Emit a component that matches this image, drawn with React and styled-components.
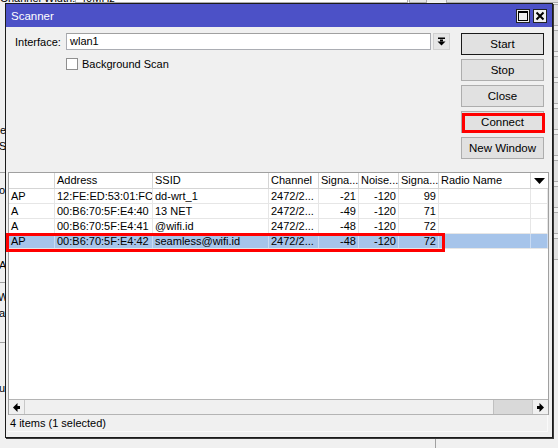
import React from 'react';
import styled, { createGlobalStyle } from 'styled-components';

const GlobalStyle = createGlobalStyle`
  html, body {
    margin: 0;
    padding: 0;
    background: #f0f0f0;
  }
  * { box-sizing: border-box; }
`;

const FONT = `"Liberation Sans", Arial, sans-serif`;

// column widths incl. right gridline: flags, address, ssid, channel, signal, noise, signal, radio name, rest
const COLS = '46px 98px 116px 50px 40px 40px 40px 92px 1fr';

const Desktop = styled.div`
  position: relative;
  width: 558px;
  height: 448px;
  overflow: hidden;
  background: #f0f0f0;
  font-family: ${FONT};
  font-size: 11px;
  color: #000;
`;

// bits of the window lying underneath the scanner
const BackText = styled.span`
  position: absolute;
  left: ${p => p.$x}px;
  top: ${p => p.$y}px;
  line-height: 13px;
  white-space: nowrap;
`;

const BackLine = styled.div`
  position: absolute;
  left: ${p => p.$x}px;
  top: ${p => p.$y}px;
  width: ${p => p.$w}px;
  height: ${p => p.$h}px;
  background: #a0a0a0;
`;

const BackBox = styled.div`
  position: absolute;
  left: ${p => p.$x}px;
  top: ${p => p.$y}px;
  width: ${p => p.$w}px;
  height: ${p => p.$h}px;
  border: 1px solid #adadad;
  background: ${p => p.$bg || '#e1e1e1'};
`;

const Window = styled.div`
  position: absolute;
  left: 5px;
  top: 3px;
  width: 548px;
  height: 435px;
  border: 1px solid #1b1b1b;
  box-shadow: 1px 1px 0 #3a3a3a;
  background: #f0f0f0;
  display: flex;
  flex-direction: column;
`;

const TitleBar = styled.div`
  height: 23px;
  flex: none;
  background: #4c51c7;
  display: flex;
  align-items: center;
  padding: 0 5px 0 5px;
`;

const TitleText = styled.div`
  flex: 1;
  color: #fff;
  font-size: 11.5px;
`;

const TitleButton = styled.div`
  width: 14px;
  height: 14px;
  margin-left: 3px;
  background: #f0f0f0;
  border: 1px solid #222;
  display: flex;
  align-items: center;
  justify-content: center;
`;

const Body = styled.div`
  flex: 1;
  display: flex;
  flex-direction: column;
  min-height: 0;
  padding-bottom: 5px;
`;

const TopArea = styled.div`
  height: 145px;
  flex: none;
  display: flex;
  padding: 6px 8px 0 9px;
`;

const Form = styled.div`
  flex: 1;
  display: flex;
  flex-direction: column;
  padding-right: 11px;
`;

const FieldRow = styled.div`
  display: flex;
  align-items: center;
  height: 17px;
`;

const Label = styled.div`
  width: 51px;
  flex: none;
`;

const TextInput = styled.div`
  flex: 1;
  height: 17px;
  background: #fff;
  border: 1px solid #abadb3;
  border-top-color: #a0a0a0;
  padding: 1px 3px;
  line-height: 13px;
`;

const DropButton = styled.div`
  width: 17px;
  height: 17px;
  margin-left: 2px;
  flex: none;
  background: #e6e6e6;
  border: 1px solid #d0d0d0;
  display: flex;
  align-items: center;
  justify-content: center;
`;

const CheckRow = styled.div`
  display: flex;
  align-items: center;
  margin-top: 8px;
  padding-left: 51px;
  height: 12px;
`;

const CheckBox = styled.div`
  width: 12px;
  height: 12px;
  background: #fff;
  border: 1px solid #8f8f8f;
  margin-right: 4px;
`;

const ButtonColumn = styled.div`
  width: 83px;
  flex: none;
  display: flex;
  flex-direction: column;
  gap: 4px;
`;

const Button = styled.div`
  position: relative;
  height: 22px;
  background: #e1e1e1;
  border: 1px solid ${p => p.$default ? '#1a1a1a' : '#adadad'};
  display: flex;
  align-items: center;
  justify-content: center;
  font-size: 11.5px;
`;

const ButtonMark = styled.div`
  position: absolute;
  left: 0;
  right: -2px;
  top: 1px;
  bottom: -1px;
  border: 3px solid #ff0000;
  pointer-events: none;
`;

const Table = styled.div`
  position: relative;
  flex: 1;
  min-height: 0;
  margin: 0 3px 0 2px;
  border: 1px solid #a0a0a0;
  border-bottom: none;
  background: #fff;
  display: flex;
  flex-direction: column;
`;

const HeaderRow = styled.div`
  display: grid;
  grid-template-columns: ${COLS};
  height: 16px;
  border-bottom: 1px solid #d5d5d5;
  flex: none;
`;

const HeaderCell = styled.div`
  border-right: ${p => p.$last ? 'none' : '1px solid #d5d5d5'};
  padding: 0 2px;
  line-height: 15px;
  white-space: nowrap;
  overflow: hidden;
  display: flex;
  align-items: center;
  justify-content: ${p => p.$center ? 'center' : 'flex-start'};
`;

const Rows = styled.div`
  flex: 1;
  min-height: 0;
`;

const Row = styled.div`
  display: grid;
  grid-template-columns: ${COLS};
  height: 15px;
  background: ${p => p.$selected ? '#a6c4ea' : '#fff'};
  border-bottom: 1px solid #e6e6e6;
`;

const Cell = styled.div`
  border-right: 1px solid ${p => p.$selected ? '#c9dbf3' : '#e6e6e6'};
  padding: 0 2px;
  line-height: 14px;
  white-space: nowrap;
  overflow: hidden;
  text-align: ${p => p.$num ? 'right' : 'left'};
`;

const RowMark = styled.div`
  position: absolute;
  left: -3px;
  top: 60px;
  width: 439px;
  height: 19px;
  border: 3px solid #ff0000;
  pointer-events: none;
`;

const ScrollBar = styled.div`
  height: 16px;
  flex: none;
  display: flex;
  border-top: 1px solid #b4b4b4;
  border-bottom: 1px solid #b4b4b4;
  background: #f0f0f0;
`;

const ScrollArrow = styled.div`
  width: 16px;
  flex: none;
  display: flex;
  align-items: center;
  justify-content: center;
  border-${p => p.$side}: 1px solid #c8c8c8;
`;

const ScrollThumb = styled.div`
  flex: 1;
  background: #f0f0f0;
`;

const ScrollTrack = styled.div`
  width: 39px;
  flex: none;
  background: #d9d9d9;
  border-left: 1px solid #c0c0c0;
`;

const StatusBar = styled.div`
  height: 17px;
  flex: none;
  margin: 0 4px 0 2px;
  padding-left: 2px;
  display: flex;
  align-items: center;
  border-bottom: 1px solid #fafafa;
  border-right: 1px solid #fafafa;
`;

const DropIcon = () => (
  <svg width="9" height="9" viewBox="0 0 9 9">
    <rect x="1" y="0.5" width="7" height="1.5" fill="#000" />
    <rect x="3" y="2.5" width="3" height="2" fill="#000" />
    <polygon points="0.5,4.5 8.5,4.5 4.5,8.5" fill="#000" />
  </svg>
);

const DownTriangle = () => (
  <svg width="11" height="6" viewBox="0 0 11 6">
    <polygon points="0,0 11,0 5.5,6" fill="#000" />
  </svg>
);

const SideArrow = ({ dir }) => (
  <svg width="7" height="9" viewBox="0 0 7 9" style={{ transform: dir === 'left' ? 'scaleX(-1)' : 'none' }}>
    <rect x="0" y="3" width="3" height="3" fill="#000" />
    <polygon points="2.5,0 7,4.5 2.5,9" fill="#000" />
  </svg>
);

const MaxIcon = () => (
  <svg width="10" height="10" viewBox="0 0 10 10">
    <rect x="0.5" y="0.5" width="9" height="9" fill="none" stroke="#000" strokeWidth="1" />
    <rect x="0.5" y="0.5" width="9" height="1.5" fill="#000" />
  </svg>
);

const CloseIcon = () => (
  <svg width="10" height="10" viewBox="0 0 10 10">
    <path d="M1.5 1.5 L8.5 8.5 M8.5 1.5 L1.5 8.5" stroke="#000" strokeWidth="2" />
  </svg>
);

const headers = ['', 'Address', 'SSID', 'Channel', 'Signa...', 'Noise...', 'Signa...', 'Radio Name'];

const networks = [
  { flags: 'AP', address: '12:FE:ED:53:01:FC', ssid: 'dd-wrt_1', channel: '2472/2...', signal: '-21', noise: '-120', snr: '99' },
  { flags: 'A', address: '00:B6:70:5F:E4:40', ssid: '13 NET', channel: '2472/2...', signal: '-49', noise: '-120', snr: '71' },
  { flags: 'A', address: '00:B6:70:5F:E4:41', ssid: '@wifi.id', channel: '2472/2...', signal: '-48', noise: '-120', snr: '72' },
  { flags: 'AP', address: '00:B6:70:5F:E4:42', ssid: 'seamless@wifi.id', channel: '2472/2...', signal: '-48', noise: '-120', snr: '72', selected: true },
];

export default function App() {
  return (
    <Desktop>
      <GlobalStyle />

      {/* window underneath */}
      <BackText $x={0} $y={-8}>Channel Width:</BackText>
      <BackBox $x={75} $y={-14} $w={333} $h={17} $bg="#fff" />
      <BackText $x={80} $y={-8}>40MHz</BackText>
      <BackBox $x={409} $y={-14} $w={18} $h={17} $bg="#e6e6e6" />
      <BackBox $x={446} $y={-20} $w={120} $h={23} />
      <BackText $x={0} $y={124}>e</BackText>
      <BackText $x={-1} $y={140}>Se</BackText>
      <BackLine $x={0} $y={172} $w={5} $h={1} />
      <BackText $x={-1} $y={184}>o</BackText>
      <BackText $x={-1} $y={259}>A</BackText>
      <BackLine $x={0} $y={282} $w={5} $h={1} />
      <BackText $x={-2} $y={291}>W</BackText>
      <BackText $x={-1} $y={307}>at</BackText>
      <BackLine $x={0} $y={342} $w={5} $h={1} />
      <BackText $x={-1} $y={382}>u</BackText>
      {[0, 26, 52, 78, 104, 130, 156, 182, 208, 234].map(y => (
        <BackBox key={y} $x={553} $y={y + 4} $w={20} $h={22} />
      ))}
      <BackLine $x={435} $y={438} $w={1} $h={12} />

      <Window>
        <TitleBar>
          <TitleText>Scanner</TitleText>
          <TitleButton><MaxIcon /></TitleButton>
          <TitleButton><CloseIcon /></TitleButton>
        </TitleBar>
        <Body>
          <TopArea>
            <Form>
              <FieldRow>
                <Label>Interface:</Label>
                <TextInput>wlan1</TextInput>
                <DropButton><DropIcon /></DropButton>
              </FieldRow>
              <CheckRow>
                <CheckBox />
                Background Scan
              </CheckRow>
            </Form>
            <ButtonColumn>
              <Button $default>Start</Button>
              <Button>Stop</Button>
              <Button>Close</Button>
              <Button>Connect<ButtonMark /></Button>
              <Button>New Window</Button>
            </ButtonColumn>
          </TopArea>

          <Table>
            <HeaderRow>
              {headers.map((h, i) => (
                <HeaderCell key={i}>{h}</HeaderCell>
              ))}
              <HeaderCell $last $center><DownTriangle /></HeaderCell>
            </HeaderRow>
            <Rows>
              {networks.map(n => (
                <Row key={n.address} $selected={n.selected}>
                  <Cell $selected={n.selected}>{n.flags}</Cell>
                  <Cell $selected={n.selected}>{n.address}</Cell>
                  <Cell $selected={n.selected}>{n.ssid}</Cell>
                  <Cell $selected={n.selected}>{n.channel}</Cell>
                  <Cell $selected={n.selected} $num>{n.signal}</Cell>
                  <Cell $selected={n.selected} $num>{n.noise}</Cell>
                  <Cell $selected={n.selected} $num>{n.snr}</Cell>
                  <Cell $selected={n.selected} />
                  <Cell $selected={n.selected} />
                </Row>
              ))}
            </Rows>
            <ScrollBar>
              <ScrollArrow $side="right"><SideArrow dir="left" /></ScrollArrow>
              <ScrollThumb />
              <ScrollTrack />
              <ScrollArrow $side="left"><SideArrow dir="right" /></ScrollArrow>
            </ScrollBar>
            <RowMark />
          </Table>
          <StatusBar>4 items (1 selected)</StatusBar>
        </Body>
      </Window>
    </Desktop>
  );
}
